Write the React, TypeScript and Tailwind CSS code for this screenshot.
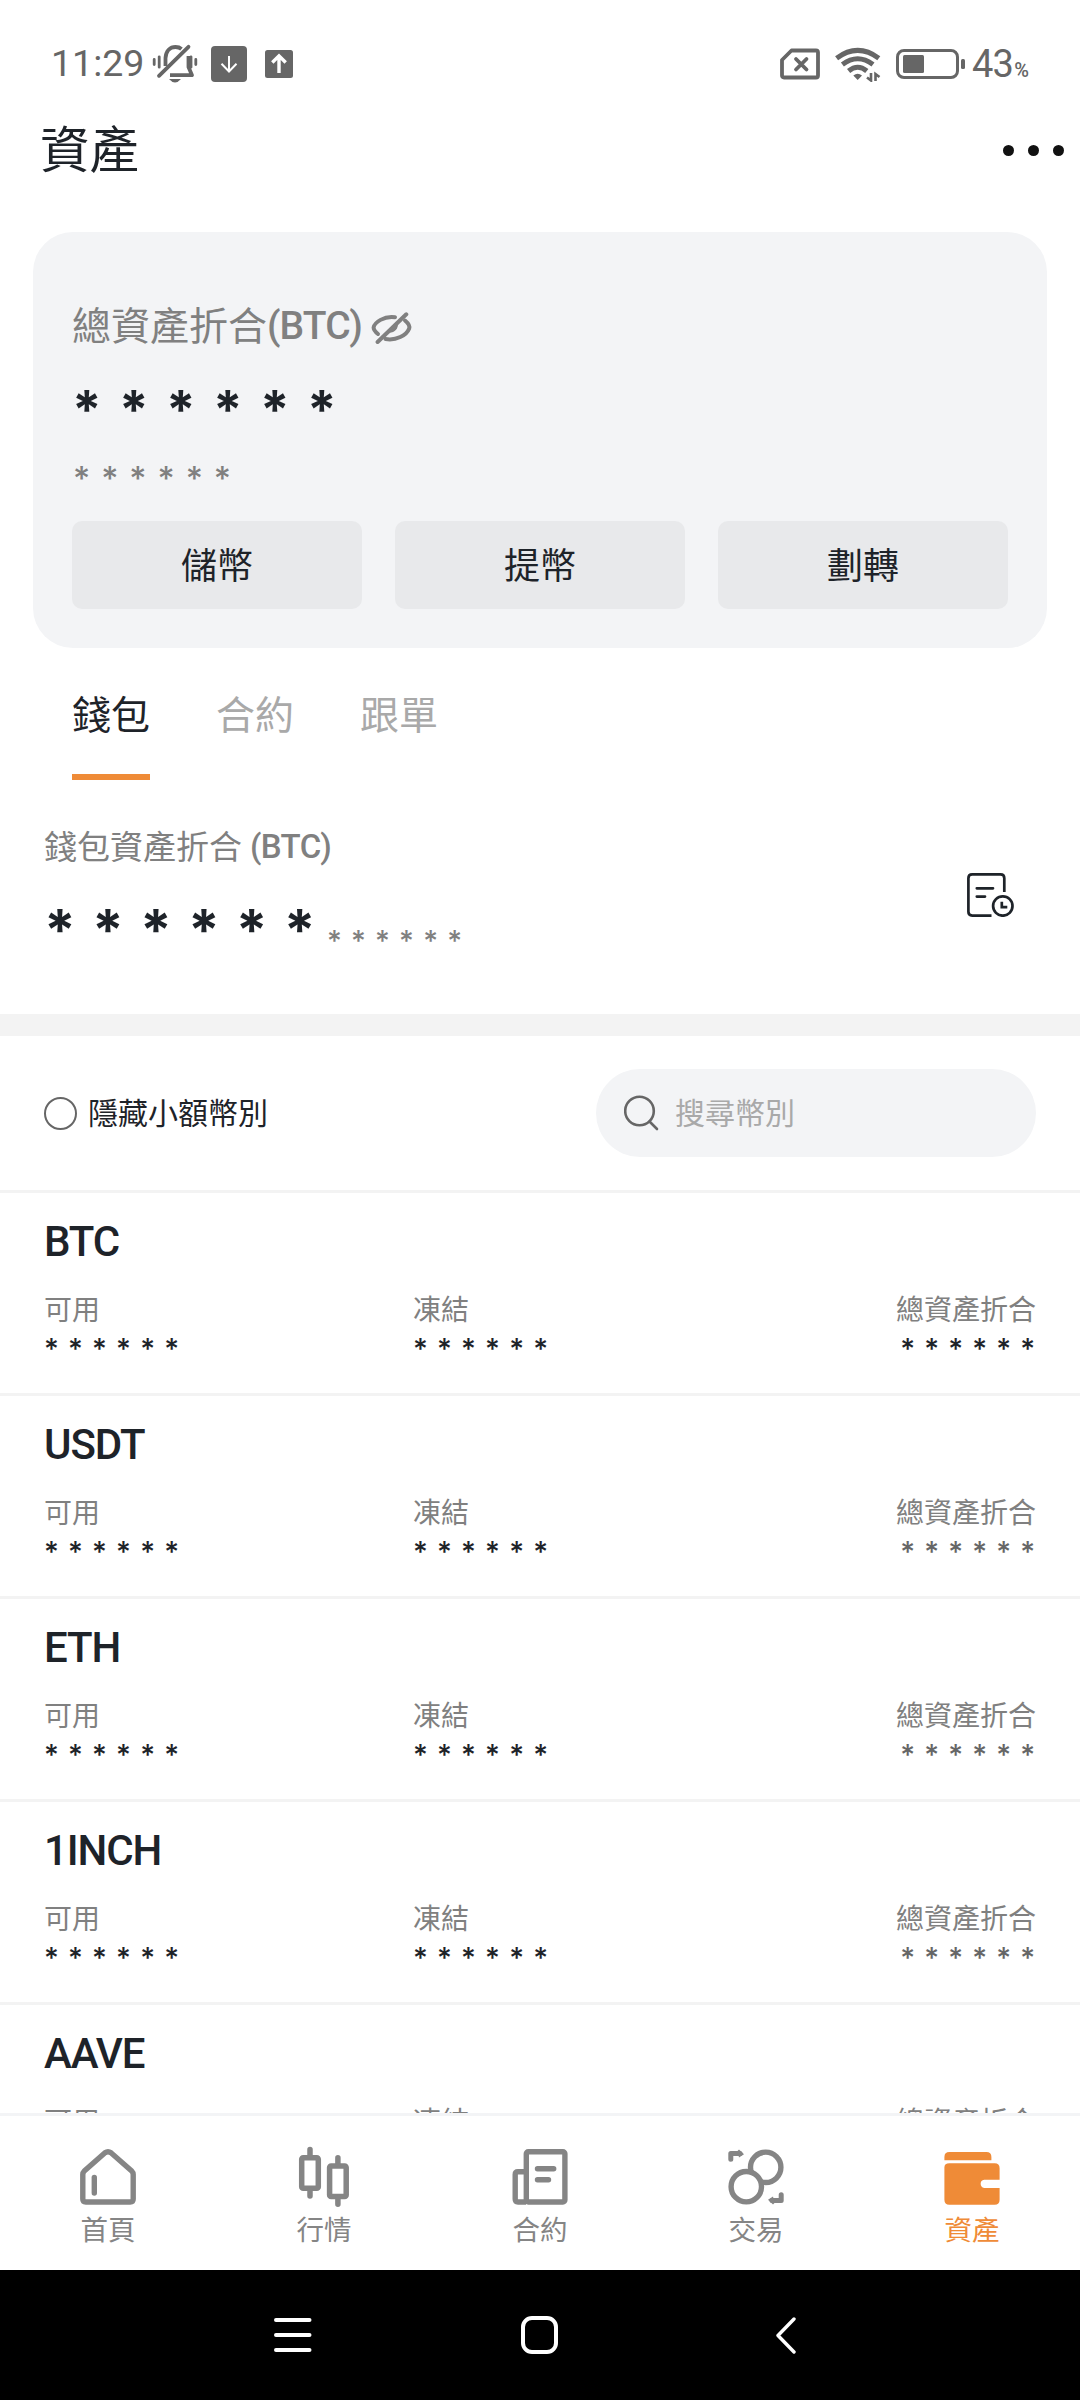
import { useState } from "react";
import clsx from "clsx";

const MASK = "* * * * * *";

const coins = ["BTC", "USDT", "ETH", "1INCH", "AAVE"];

function StatusBar() {
  return (
    <div className="h-[100px] pt-7 pl-[51px] pr-[51px] flex items-center justify-between shrink-0 text-[#666] font-[Roboto,sans-serif]">
      <div className="flex items-center">
        <span className="w-[100px] text-[37.5px] leading-none">11:29</span>
        {/* Muted bell */}
        <svg width="48" height="40" viewBox="0 0 48 40" fill="none" stroke="currentColor" strokeWidth="3.8" strokeLinecap="round">
          <path d="M14.5 22V14C15 7 19 3 24.5 3C27 3 29 3.7 30.5 5" strokeLinecap="butt" />
          <path d="M37.5 2.8 8 31.8" />
          <path d="M37.5 12V23L41 31.2H19" strokeLinejoin="round" strokeLinecap="butt" />
          <path d="M18 35H30Q24 42 18 35Z" fill="currentColor" stroke="none" />
          <path d="M3.2 15.5V20.5M8.2 12.8V23.2M40 12.8V23.2M44.8 15.5V20.5" strokeWidth="2.8" />
        </svg>
        <svg className="ml-3" width="36" height="36" viewBox="0 0 36 36" fill="none">
          <rect width="36" height="36" rx="4" fill="currentColor" />
          <path d="M18 10V25.2M10.5 17.8 18 25.5 25.5 17.8" stroke="#fff" strokeWidth="2" />
        </svg>
        <svg className="ml-[18px]" width="28" height="28" viewBox="0 0 28 28" fill="none">
          <rect width="28" height="28" rx="2.5" fill="currentColor" />
          <path d="M14 23V6M7.3 12.5 14 5.8 20.7 12.5" stroke="#fff" strokeWidth="3.4" />
        </svg>
      </div>
      <div className="flex items-center">
        <svg width="40" height="32" viewBox="0 0 40 32" fill="none" stroke="currentColor" strokeWidth="3.8" strokeLinejoin="round">
          <path d="M11.5 2.5H36Q38 2.5 38 4.5V27.5Q38 29.5 36 29.5H4Q2 29.5 2 27.5V12Z" />
          <path d="M16 11 26.5 21.5M26.5 11 16 21.5" strokeLinecap="round" />
        </svg>
        <svg className="ml-[15px]" width="47" height="36" viewBox="0 0 47 36" fill="none" stroke="currentColor" strokeWidth="5">
          <path d="M1.6 12.2Q22.7-3.5 43.8 12.2" />
          <path d="M7.4 18.4Q22.7 7 38 18.4" />
          <path d="M13.6 25Q22.7 17.5 31.8 25" />
          <path d="M18.3 29.4Q22.7 26 27 29.4L22.7 34Z" fill="currentColor" stroke="none" />
          <path d="M36 27V34.5L32 31.5M40.5 35V28L44.5 31" strokeWidth="2.6" />
        </svg>
        <svg className="ml-[14px]" width="69" height="30" viewBox="0 0 69 30" fill="none">
          <rect x="1.5" y="1.5" width="60" height="27" rx="6.5" stroke="currentColor" strokeWidth="3" />
          <rect x="7" y="6" width="21" height="18" rx="1.5" fill="currentColor" />
          <rect x="65" y="10" width="4" height="10" rx="1.5" fill="currentColor" />
        </svg>
        <span className="ml-[7px] text-[38px] leading-none tracking-[-0.7px]">43</span>
        <span className="ml-px mt-3 text-[20px] leading-none font-medium">%</span>
      </div>
    </div>
  );
}

function EyeOffIcon() {
  return (
    <svg width="42" height="32" viewBox="0 0 42 32" fill="none" stroke="currentColor" strokeWidth="4" strokeLinecap="round">
      <path d="M24 5.2C13 3.6 3.5 10.5 2.6 15.5C2.6 18 4.5 20 7 22" />
      <path d="M34 8.5C37 11 39 14 38.2 16.5C35.5 23.5 25 28.8 14.5 27" />
      <path d="M35.3 2.3 6.6 30" />
      <path d="M26.8 10C28 17.5 23 21.5 16 20.5Z" fill="currentColor" stroke="none" />
    </svg>
  );
}

function HistoryIcon() {
  return (
    <svg width="47" height="44" viewBox="0 0 47 44" fill="none" stroke="#1e2329" strokeWidth="2.7">
      <path d="M37.3 19V5.2Q37.3 1.4 33.5 1.4H5.2Q1.4 1.4 1.4 5.2V38.8Q1.4 42.6 5.2 42.6H24.5" />
      <path d="M9.8 15.3H26M9.8 23.6H18" strokeLinecap="round" />
      <circle cx="35.8" cy="33" r="9.7" />
      <path d="M34.8 28.7V34.2H40.3" />
    </svg>
  );
}

function HomeIcon() {
  return (
    <svg width="56" height="62" viewBox="0 0 56 62" fill="none" stroke="currentColor" strokeWidth="5.4">
      <path d="M25 6.8 4.6 24.6Q2.8 26.4 2.8 28.5V53Q2.8 56 5.8 56H50.2Q53.2 56 53.2 53V28.5Q53.2 26.4 51.4 24.6L31 6.8Q28 4.6 25 6.8Z" />
      <path d="M14.3 31.5V47" strokeLinecap="round" />
    </svg>
  );
}

function MarketIcon() {
  return (
    <svg width="56" height="62" viewBox="0 0 56 62" fill="none" stroke="currentColor" strokeWidth="5.5" strokeLinecap="round">
      <rect x="5.7" y="11.7" width="16.6" height="30.6" rx="1.5" />
      <rect x="33.6" y="20" width="16.6" height="30.6" rx="1.5" />
      <path d="M14 3.4V10M14 44V50M41.9 11.7V18M41.9 52V58.3" />
    </svg>
  );
}

function ContractIcon() {
  return (
    <svg width="56" height="62" viewBox="0 0 56 62" fill="none" stroke="currentColor" strokeWidth="5.4">
      <rect x="14.3" y="5.7" width="38.6" height="50.3" rx="2" />
      <path d="M14 25.7H6Q3.2 25.7 3.2 28.5V53Q3.2 56 6 56H14" />
      <path d="M25.5 22.7H41.7M25.5 33.7H36.5" strokeLinecap="round" />
    </svg>
  );
}

function TradeIcon() {
  return (
    <svg width="56" height="62" viewBox="0 0 56 62" fill="none" stroke="currentColor" strokeWidth="5.4">
      <circle cx="37.7" cy="21.3" r="15.2" />
      <circle cx="18.3" cy="40.7" r="15.2" fill="#fff" />
      <path d="M2.8 13.3V7.6H12" strokeLinecap="round" strokeLinejoin="round" strokeWidth="5" />
      <path d="M9.5 5 11 3.4 16 8.3 11 11.5Z" fill="currentColor" stroke="none" />
      <path d="M53.2 48.7V54.4H44" strokeLinecap="round" strokeLinejoin="round" strokeWidth="5" />
      <path d="M46.5 57 45 58.6 40 53.7 45 50.5Z" fill="currentColor" stroke="none" />
    </svg>
  );
}

function WalletIcon() {
  return (
    <svg width="56" height="62" viewBox="0 0 56 62" fill="currentColor">
      <path d="M.4 14.3V11Q.4 6 5.4 6H42.4Q47.4 6 47.4 11V14.3Z" />
      <path d="M5.4 17.3H50.6Q55.6 17.3 55.6 22.3V33.7H40.2A4.2 4.2 0 0 0 40.2 42H55.6V53.7Q55.6 58.7 50.6 58.7H5.4Q.4 58.7 .4 53.7V21.3Q.4 17.3 5.4 17.3Z" />
    </svg>
  );
}

function BalanceCard() {
  return (
    <div className="mt-8 mx-[33px] h-[416px] px-[39px] pt-[69px] rounded-[40px] bg-[#f3f4f6] shrink-0">
      <div className="h-[50px] flex items-center text-[39px] text-[#808080]">
        <span className="pb-1.5">總資產折合</span>
        <span className="font-[Roboto] font-medium tracking-[-0.9px]">(BTC)</span>
        <span className="ml-[9px] pt-1">
          <EyeOffIcon />
        </span>
      </div>
      <p className="mt-[34px] h-[50px] leading-[50px] font-[Inter] font-bold text-[53px] tracking-[2.4px] text-[#1e2329]">
        {MASK}
      </p>
      <p className="mt-[23px] pl-px h-10 leading-10 font-[Inter] font-medium text-[33px] tracking-[1.1px] text-[#808080]">
        {MASK}
      </p>
      <div className="mt-[23px] grid grid-cols-3 gap-[33px]">
        {["儲幣", "提幣", "劃轉"].map((label) => (
          <button key={label} className="h-[88px] pb-1 rounded-[10px] bg-[#e8e9eb] text-[36px] text-[#1e2329]">
            {label}
          </button>
        ))}
      </div>
    </div>
  );
}

function CoinRow({ name, first }: { name: string; first: boolean }) {
  return (
    <div className="h-[203px] px-11 pt-6 border-b-3 border-[#f3f3f3] shrink-0">
      <p className="h-[50px] leading-[50px] font-[Roboto] font-medium text-[42px] tracking-[-1.1px] text-[#1e2329]">
        {name}
      </p>
      <div className="mt-[21px] grid grid-cols-[369px_1fr_auto] text-[28px] leading-10 text-[#808080]">
        <span>可用</span>
        <span>凍結</span>
        <span>總資產折合</span>
      </div>
      <div className="mt-[5px] grid grid-cols-[369px_1fr_auto] font-[Inter] font-medium text-[28.5px] leading-8 tracking-[0.8px] text-[#1e2329]">
        <span>{MASK}</span>
        <span>{MASK}</span>
        <span className={clsx(!first && "text-[#666]")}>{MASK}</span>
      </div>
    </div>
  );
}

const navItems = [
  { label: "首頁", icon: <HomeIcon /> },
  { label: "行情", icon: <MarketIcon /> },
  { label: "合約", icon: <ContractIcon /> },
  { label: "交易", icon: <TradeIcon /> },
  { label: "資產", icon: <WalletIcon /> },
];

export default function App() {
  const [tab, setTab] = useState("錢包");

  return (
    <div className="w-[1080px] h-[2400px] flex flex-col overflow-hidden bg-white font-['Noto_Sans_CJK_TC',sans-serif]">
      <StatusBar />

      <div className="h-[100px] pl-10 pr-4 flex items-center justify-between shrink-0">
        <h1 className="pb-1.5 text-[49.5px] leading-none text-[#1e2329]">資產</h1>
        <div className="flex gap-[14px]">
          <span className="size-[11px] rounded-full bg-[#111]" />
          <span className="size-[11px] rounded-full bg-[#111]" />
          <span className="size-[11px] rounded-full bg-[#111]" />
        </div>
      </div>

      <BalanceCard />

      {/* Account tabs */}
      <div className="h-[132px] pl-[72px] flex gap-[66px] shrink-0">
        {["錢包", "合約", "跟單"].map((name) => (
          <button
            key={name}
            onClick={() => setTab(name)}
            className={clsx(
              "pt-0.5 border-b-6 text-[39px]",
              tab === name ? "border-[#ef8b37] text-[#1e2329]" : "border-transparent text-[#a9a9a9]"
            )}
          >
            {name}
          </button>
        ))}
      </div>

      <div className="h-[234px] pl-11 pr-[66px] flex justify-between shrink-0">
        <div className="pt-[47px]">
          <p className="h-10 flex items-center text-[33px] text-[#808080]">
            <span className="pb-0.5">錢包資產折合</span>
            <span className="ml-2 font-[Roboto] font-medium tracking-[-0.6px]">(BTC)</span>
          </p>
          <div className="mt-[33px] h-[60px] flex font-[Inter]">
            <span className="leading-[60px] font-bold text-[57px] tracking-[1.3px] text-[#1e2329]">{MASK}</span>
            <span className="ml-2.5 pt-[11px] leading-[60px] font-medium text-[28.5px] tracking-[0.8px] text-[#808080]">{MASK}</span>
          </div>
        </div>
        <div className="pt-[93px]">
          <HistoryIcon />
        </div>
      </div>

      <div className="h-[22px] bg-[#f3f3f3] shrink-0" />

      {/* Filter and search */}
      <div className="h-[157px] px-11 flex items-center justify-between border-b-3 border-[#f3f3f3] shrink-0">
        <label className="flex items-center gap-[11px] text-[30px] text-[#1e2329]">
          <span className="size-[33px] rounded-full border-2 border-[#666]" />
          <span className="pb-[3px]">隱藏小額幣別</span>
        </label>
        <div className="w-[440px] h-[88px] pl-7 flex items-center rounded-full bg-[#f3f4f6] text-[30px] text-[#a9a9a9]">
          <svg width="36" height="36" viewBox="0 0 36 36" fill="none" stroke="#666" strokeWidth="2.6" strokeLinecap="round">
            <circle cx="15.5" cy="16" r="14.3" />
            <path d="M25.5 26.5 33 34" />
          </svg>
          <span className="ml-[15px] pb-[3px]">搜尋幣別</span>
        </div>
      </div>

      <div className="flex-1 min-h-0 flex flex-col overflow-hidden">
        {coins.map((name, i) => (
          <CoinRow key={name} name={name} first={i === 0} />
        ))}
      </div>

      <nav className="h-[157px] pt-[30px] grid grid-cols-5 border-t-3 border-[#f3f4f6] shrink-0">
        {navItems.map(({ label, icon }, i) => (
          <div
            key={label}
            className={clsx("flex flex-col items-center", i === 4 ? "text-[#ef8b37]" : "text-[#858585]")}
          >
            {icon}
            <span className="text-[27.5px] leading-10">{label}</span>
          </div>
        ))}
      </nav>

      {/* System navigation */}
      <div className="h-[130px] pl-[274px] pr-[284px] flex items-center justify-between bg-black shrink-0">
        <svg width="38" height="34" viewBox="0 0 38 34" stroke="#fff" strokeWidth="4" strokeLinecap="round">
          <path d="M2 2H35.5M2 17H35.5M2 32H35.5" />
        </svg>
        <span className="mr-2.5 w-[37px] h-[38px] rounded-[11px] border-4 border-white" />
        <svg width="20" height="37" viewBox="0 0 20 37" fill="none" stroke="#fff" strokeWidth="3.4" strokeLinecap="round" strokeLinejoin="round">
          <path d="M18 2 2 18.5 18 35" />
        </svg>
      </div>
    </div>
  );
}
